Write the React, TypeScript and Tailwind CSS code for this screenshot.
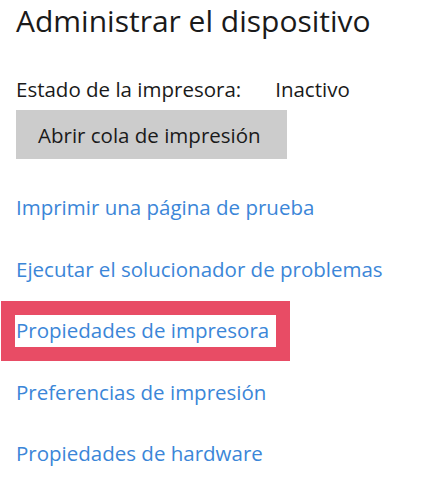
import React from "react";

const links = [
  { label: "Imprimir una página de prueba" },
  { label: "Ejecutar el solucionador de problemas" },
  { label: "Propiedades de impresora", highlight: true },
  { label: "Preferencias de impresión" },
  { label: "Propiedades de hardware" },
];

export default function App() {
  return (
    <div
      className="min-h-[482px] w-[442px] bg-white pl-4 text-[#1a1a1a]"
      style={{ fontFamily: '"Open Sans", "Noto Sans", sans-serif' }}
    >
      {/* Titulo */}
      <h1 className="text-[30px] font-normal leading-[42px]">Administrar el dispositivo</h1>

      {/* Estado */}
      <div className="mt-[33px] flex text-[20.5px] leading-[28px]">
        <span>Estado de la impresora:</span>
        <span className="ml-[34px]">Inactivo</span>
      </div>

      <button className="mt-[7px] flex h-[49px] w-[271px] items-center bg-[#cccccc] pl-[22px] text-[20.5px] leading-[28px] text-[#1a1a1a]">
        Abrir cola de impresión
      </button>

      {/* Enlaces */}
      <div className="mt-[34px] flex flex-col items-start gap-[33.5px] text-[20.5px] leading-[28px] text-[#3b86d8]">
        {links.map((l) =>
          l.highlight ? (
            <a
              key={l.label}
              href="#"
              className="-mt-[15px] -mb-[17px] -ml-[15px] block w-[289px] border-[14px] border-[#e84c65] bg-white pt-px pb-[3px] pl-px"
            >
              {l.label}
            </a>
          ) : (
            <a key={l.label} href="#" className="block">
              {l.label}
            </a>
          )
        )}
      </div>
    </div>
  );
}
